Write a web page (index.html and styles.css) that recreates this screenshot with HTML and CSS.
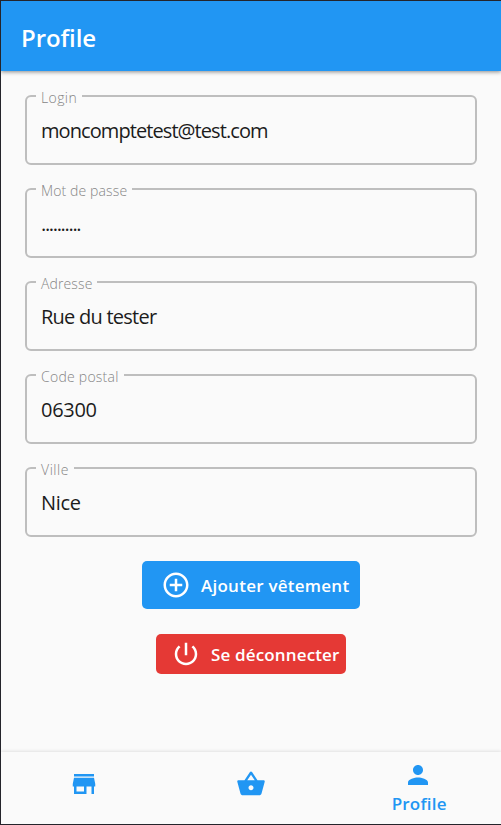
FILE: index.html
```html
<!DOCTYPE html>
<html lang="fr">
<head>
<meta charset="utf-8">
<title>Profile</title>
<link rel="stylesheet" href="styles.css">
</head>
<body>
<div class="app">
  <header class="bar"><h1>Profile</h1></header>
  <main class="content">
    <fieldset class="field login"><legend><span>Login</span></legend><div class="value">moncomptetest@test.com</div></fieldset>
    <fieldset class="field password"><legend><span>Mot de passe</span></legend><div class="value">..........</div></fieldset>
    <fieldset class="field address"><legend><span>Adresse</span></legend><div class="value">Rue du tester</div></fieldset>
    <fieldset class="field zip"><legend><span>Code postal</span></legend><div class="value">06300</div></fieldset>
    <fieldset class="field city"><legend><span>Ville</span></legend><div class="value">Nice</div></fieldset>
    <button class="btn add">
      <svg viewBox="0 0 24 24"><path d="M13 7h-2v4H7v2h4v4h2v-4h4v-2h-4V7zm-1-5C6.480 2 2 6.480 2 12s4.480 10 10 10 10-4.480 10-10S17.520 2 12 2zm0 18c-4.410 0-8-3.590-8-8s3.590-8 8-8 8 3.590 8 8-3.590 8-8 8z"/></svg>
      <span>Ajouter vêtement</span>
    </button>
    <button class="btn logout">
      <svg viewBox="0 0 24 24"><path d="M13 3h-2v10h2V3zm4.830 2.170l-1.420 1.420C17.990 7.860 19 9.810 19 12c0 3.870-3.130 7-7 7s-7-3.130-7-7c0-2.190 1.010-4.140 2.580-5.420L6.170 5.170C4.230 6.820 3 9.260 3 12c0 4.970 4.030 9 9 9s9-4.030 9-9c0-2.740-1.230-5.180-3.170-6.830z"/></svg>
      <span>Se déconnecter</span>
    </button>
  </main>
  <nav class="tabs">
    <a class="tab"><svg viewBox="0 0 24 24"><path d="M20 4H4v2h16V4zm1 10v-2l-1-5H4l-1 5v2h1v6h10v-6h4v6h2v-6h1zm-9 4H6v-4h6v4z"/></svg></a>
    <a class="tab"><svg viewBox="0 0 24 24"><path d="M17.210 9l-4.380-6.560c-.19-.28-.51-.42-.83-.42s-.64.14-.83.43L6.790 9H2c-.55 0-1 .45-1 1 0 .09.010.18.040.27l2.540 9.270c.23.840 1 1.460 1.920 1.460h13c.92 0 1.690-.62 1.930-1.460l2.540-9.270L23 10c0-.55-.45-1-1-1h-4.790zM9 9l3-4.400L15 9H9zm3 8c-1.100 0-2-.9-2-2s.9-2 2-2 2 .9 2 2-.9 2-2 2z"/></svg></a>
    <a class="tab labelled"><svg viewBox="0 0 24 24"><path d="M12 12c2.210 0 4-1.790 4-4s-1.790-4-4-4-4 1.790-4 4 1.790 4 4 4zm0 2c-2.670 0-8 1.340-8 4v2h16v-2c0-2.660-5.330-4-8-4z"/></svg><span>Profile</span></a>
  </nav>
</div>
</body>
</html>
```
FILE: styles.css
```css
* { box-sizing: border-box; }
body { margin: 0; font-family: "Open Sans", "Noto Sans", sans-serif; }
.app {
  width: 501px; height: 825px;
  display: flex; flex-direction: column;
  background: #fafafa;
  border: solid #24242b; border-width: 1px 0 1px 1px;
  overflow: hidden;
}
.bar {
  height: 70px; flex: none;
  display: flex; align-items: center;
  padding: 4px 0 0 20px;
  background: #2196f3; color: #fff;
  box-shadow: 0 1px 4px rgba(0, 0, 0, .45);
}
h1 { margin: 0; font-size: 24px; line-height: 30px; font-weight: 600; letter-spacing: -.1px; }
.content {
  flex: 1;
  display: flex; flex-direction: column; align-items: center;
  padding: 16px 24px 0;
}
.field {
  width: 452px; height: 78px; flex: none;
  margin: 0 0 15px; padding: 0 0 0 9px;
  border: 2px solid #bebebe; border-radius: 6px;
}
.field legend {
  padding: 2px 5px 0; height: 18px;
  font-size: 14px; line-height: 18px; color: #858585; font-weight: 300;
}
.value { padding-left: 5px; margin-top: 12px; font-size: 20px; line-height: 28px; color: #1c1c1c; }
.login legend { letter-spacing: .4px; }
.password legend, .address legend { letter-spacing: .12px; }
.zip legend { letter-spacing: .25px; }
.city legend { letter-spacing: .55px; }
.login .value { letter-spacing: -.92px; }
.password .value { letter-spacing: -1.330px; }
.address .value { letter-spacing: -.75px; }
.zip .value, .city .value { letter-spacing: -.3px; }
.btn {
  display: flex; align-items: center; flex: none;
  border: 0; border-radius: 5px; padding: 0;
  color: #fff; font: 600 17px/24px "Open Sans", sans-serif;
  white-space: nowrap;
}
.btn svg { flex: none; width: 30px; height: 30px; fill: currentColor; }
.btn span { padding-top: 2px; }
.add { width: 218px; height: 48px; margin-top: 9px; padding-left: 19px; gap: 10px; background: #2196f3; letter-spacing: .25px; }
.logout { width: 190px; height: 40px; margin-top: 25px; padding-left: 15px; gap: 10px; background: #e53935; letter-spacing: .15px; }
.tabs {
  height: 72px; flex: none;
  display: grid; grid-template-columns: repeat(3, 1fr);
  background: #fafafa; box-shadow: 0 -1px 3px rgba(0, 0, 0, .1);
}
.tab { display: flex; flex-direction: column; align-items: center; justify-content: center; padding-bottom: 8px; color: #2196f3; }
.labelled { padding-bottom: 1px; }
.tab svg { flex: none; width: 30px; height: 30px; fill: currentColor; }
.tab span { font-size: 17px; line-height: 22px; font-weight: 600; letter-spacing: .2px; margin: 3px 0 0 3px; }
```
